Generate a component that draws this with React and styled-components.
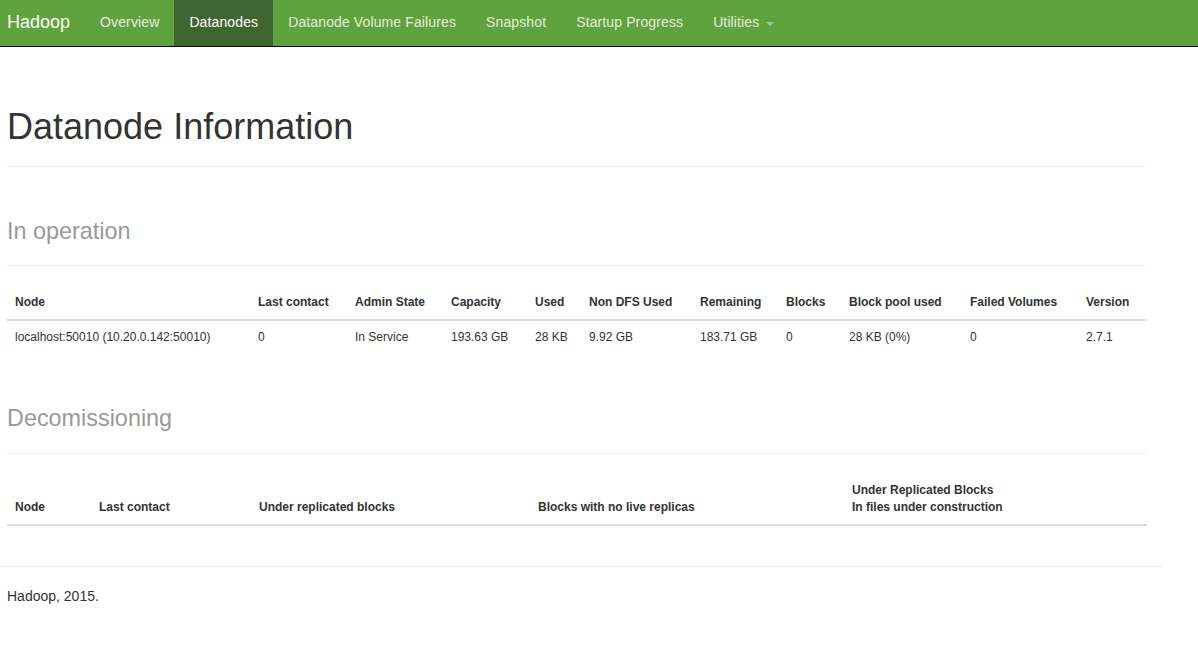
import React from "react";
import styled, { createGlobalStyle } from "styled-components";

const GlobalStyle = createGlobalStyle`
  html, body {
    margin: 0;
    padding: 0;
    background: #fff;
  }
  body {
    font-family: "Liberation Sans", Arial, sans-serif;
    font-size: 14px;
    line-height: 1.42857;
    color: #333;
  }
  * {
    box-sizing: border-box;
  }
`;

const NavbarStyled = styled.nav`
  height: 47px;
  background: #5fa33e;
  border-bottom: 1px solid #080808;
`;

const NavInner = styled.div`
  display: flex;
  align-items: stretch;
  height: 46px;
  padding-left: 7px;
`;

const Brand = styled.a`
  display: flex;
  align-items: center;
  padding-right: 15px;
  font-size: 18px;
  color: #fff;
  text-decoration: none;
`;

const NavList = styled.ul`
  display: flex;
  list-style: none;
  margin: 0;
  padding: 0;
`;

const NavLink = styled.a`
  display: flex;
  align-items: center;
  height: 46px;
  padding: 0 15px;
  font-size: 14px;
  letter-spacing: 0.12px;
  text-decoration: none;
  color: ${(p) => (p.$active ? "#fff" : "#e4eedd")};
  background: ${(p) => (p.$active ? "#3f6630" : "transparent")};
`;

const Caret = styled.span`
  display: inline-block;
  width: 0;
  height: 0;
  margin-left: 7px;
  margin-top: 2px;
  border-top: 4px solid #9fc98a;
  border-left: 4px solid transparent;
  border-right: 4px solid transparent;
`;

const Container = styled.div`
  width: 1154px;
  padding: 20px 7px 0;
`;

const PageHeader = styled.div`
  margin: 40px 0 20px;
  padding-bottom: 9px;
  border-bottom: 1px solid #eee;
`;

const Title = styled.h1`
  margin: 20px 0 10px;
  font-size: 36px;
  font-weight: 400;
  line-height: 1.1;
  color: #333;
`;

const Sub = styled.small`
  font-size: 65%;
  color: #999;
  line-height: 1;
`;

const Table = styled.table`
  width: 100%;
  table-layout: fixed;
  border-collapse: collapse;
  border-spacing: 0;
  margin-bottom: 20px;
  font-size: 12px;
`;

const Th = styled.th`
  padding: 8px;
  text-align: left;
  vertical-align: bottom;
  font-weight: 700;
  line-height: 1.42857;
  border-bottom: 2px solid #ddd;
`;

const Td = styled.td`
  padding: 8px;
  line-height: 1.42857;
  vertical-align: top;
  border-top: 1px solid #ddd;
`;

const FooterRule = styled.hr`
  width: 1162px;
  margin: 40px 0 20px;
  border: 0;
  border-top: 1px solid #eee;
`;

const FooterText = styled.p`
  margin: 0 0 10px;
  padding-left: 7px;
`;

const navItems = [
  "Overview",
  "Datanodes",
  "Datanode Volume Failures",
  "Snapshot",
  "Startup Progress",
];

const liveCols = [
  ["Node", 243],
  ["Last contact", 97],
  ["Admin State", 96],
  ["Capacity", 84],
  ["Used", 54],
  ["Non DFS Used", 111],
  ["Remaining", 86],
  ["Blocks", 63],
  ["Block pool used", 121],
  ["Failed Volumes", 116],
  ["Version", 69],
];

const liveRow = [
  "localhost:50010 (10.20.0.142:50010)",
  "0",
  "In Service",
  "193.63 GB",
  "28 KB",
  "9.92 GB",
  "183.71 GB",
  "0",
  "28 KB (0%)",
  "0",
  "2.7.1",
];

const decomCols = [
  ["Node", 84],
  ["Last contact", 160],
  ["Under replicated blocks", 279],
  ["Blocks with no live replicas", 314],
  [["Under Replicated Blocks", "In files under construction"], 303],
];

const SectionHeader = ({ children }) => (
  <PageHeader>
    <Title>
      <Sub>{children}</Sub>
    </Title>
  </PageHeader>
);

const App = () => (
  <>
    <GlobalStyle />
    <NavbarStyled>
      <NavInner>
        <Brand href="#">Hadoop</Brand>
        <NavList>
          {navItems.map((item) => (
            <li key={item}>
              <NavLink href="#" $active={item === "Datanodes"}>
                {item}
              </NavLink>
            </li>
          ))}
          <li>
            <NavLink href="#">
              Utilities
              <Caret />
            </NavLink>
          </li>
        </NavList>
      </NavInner>
    </NavbarStyled>

    <Container>
      <PageHeader>
        <Title>Datanode Information</Title>
      </PageHeader>

      <SectionHeader>In operation</SectionHeader>
      <Table>
        <colgroup>
          {liveCols.map(([name, w]) => (
            <col key={name} style={{ width: w }} />
          ))}
        </colgroup>
        <thead>
          <tr>
            {liveCols.map(([name]) => (
              <Th key={name}>{name}</Th>
            ))}
          </tr>
        </thead>
        <tbody>
          <tr>
            {liveRow.map((v, i) => (
              <Td key={i}>{v}</Td>
            ))}
          </tr>
        </tbody>
      </Table>

      <SectionHeader>Decomissioning</SectionHeader>
      <Table>
        <colgroup>
          {decomCols.map(([, w], i) => (
            <col key={i} style={{ width: w }} />
          ))}
        </colgroup>
        <thead>
          <tr>
            {decomCols.map(([name], i) => (
              <Th key={i}>
                {Array.isArray(name) ? (
                  <>
                    {name[0]}
                    <br />
                    {name[1]}
                  </>
                ) : (
                  name
                )}
              </Th>
            ))}
          </tr>
        </thead>
      </Table>
    </Container>

    <FooterRule />
    <FooterText>Hadoop, 2015.</FooterText>
  </>
);

export default App;
